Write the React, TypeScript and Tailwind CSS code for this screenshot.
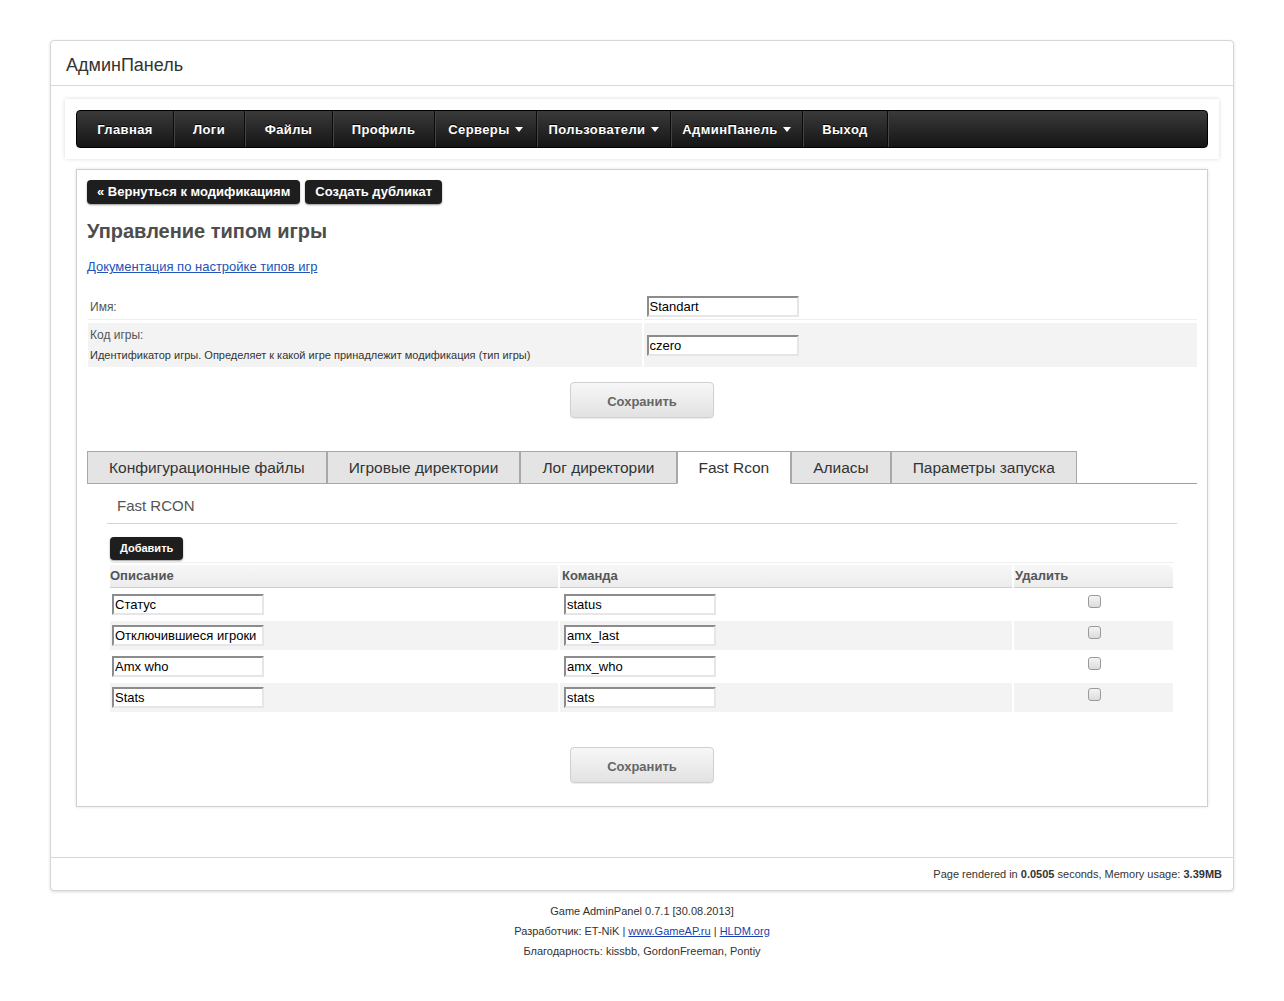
import React from "react";

const NAV = [
  { label: "Главная", w: "w-[97px]" },
  { label: "Логи", w: "w-[71px]" },
  { label: "Файлы", w: "w-[88px]" },
  { label: "Профиль", w: "w-[102px]" },
  { label: "Серверы", w: "w-[102px]", caret: true },
  { label: "Пользователи", w: "w-[134px]", caret: true },
  { label: "АдминПанель", w: "w-[132px]", caret: true },
  { label: "Выход", w: "w-[85px]" },
];

const TABS = [
  "Конфигурационные файлы",
  "Игровые директории",
  "Лог директории",
  "Fast Rcon",
  "Алиасы",
  "Параметры запуска",
];

const ROWS = [
  { desc: "Статус", cmd: "status" },
  { desc: "Отключившиеся игроки", cmd: "amx_last" },
  { desc: "Amx who", cmd: "amx_who" },
  { desc: "Stats", cmd: "stats" },
];

const font = "font-['Liberation_Sans',Arial,sans-serif]";

function Caret() {
  return (
    <span className="ml-[5px] inline-block h-0 w-0 border-x-[4px] border-t-[5px] border-x-transparent border-t-white align-middle" />
  );
}

function Field({ value }: { value: string }) {
  return (
    <input
      readOnly
      defaultValue={value}
      className={`${font} h-[21px] w-[152px] border-2 border-t-[#8c8c8c] border-l-[#8c8c8c] border-r-[#e6e6e6] border-b-[#e6e6e6] bg-white pl-[1px] text-[13px] text-black outline-none`}
    />
  );
}

function DarkButton({ text, small }: { text: string; small?: boolean }) {
  return (
    <button
      className={`${font} block rounded-[4px] bg-[#1e1e1e] font-bold text-white shadow-[0_1px_2px_rgba(0,0,0,0.4)] ${
        small ? "h-[23px] px-[10px] text-[11px]" : "h-[24px] px-[10px] text-[13px]"
      }`}
    >
      {text}
    </button>
  );
}

function SaveButton() {
  return (
    <button
      className={`${font} mx-auto block h-[36px] w-[144px] rounded-[4px] border border-[#d0d0d0] bg-gradient-to-b from-[#f7f7f7] to-[#e2e2e2] pt-[4px] text-[13px] font-bold text-[#666] shadow-[0_1px_1px_rgba(0,0,0,0.08)]`}
    >
      Сохранить
    </button>
  );
}

function Checkbox() {
  return (
    <span className="block h-[13px] w-[13px] rounded-[3px] border border-[#9a9a9a] bg-gradient-to-b from-[#f4f4f4] to-[#dcdcdc]" />
  );
}

export default function App() {
  return (
    <div className={`${font} min-h-screen bg-white pt-[40px] text-[#333]`}>
      <div className="mx-auto w-[1184px] rounded-[4px] border border-[#d6d6d6] bg-white shadow-[0_1px_3px_rgba(0,0,0,0.15)]">
        <div className="flex h-[45px] items-center border-b border-[#d9d9d9] px-[15px] pt-[4px] text-[18px] text-[#333]">
          АдминПанель
        </div>

        <div className="px-[25px] pb-[50px] pt-[13px]">
          <div className="-mx-[11px] bg-white p-[11px] shadow-[0_0_4px_rgba(0,0,0,0.15)]">
            <nav className="flex h-[38px] rounded-[4px] border border-black bg-gradient-to-b from-[#3a3a3a] to-[#161616]">
              {NAV.map((item) => (
                <div
                  key={item.label}
                  className={`${item.w} flex items-center justify-center border-r border-r-[#0a0a0a] pt-[1px] shadow-[1px_0_0_#444] text-[13px] font-bold tracking-[0.4px] text-white [text-shadow:0_-1px_0_#000]`}
                >
                  {item.label}
                  {item.caret && <Caret />}
                </div>
              ))}
            </nav>
          </div>

          <div className="mt-[10px] border border-[#cfcfcf] px-[10px] pb-[23px] pt-[10px] shadow-[0_0_3px_rgba(0,0,0,0.12)]">
            <div className="flex gap-[5px]">
              <DarkButton text="« Вернуться к модификациям" />
              <DarkButton text="Создать дубликат" />
            </div>

            <h1 className="mt-[13px] text-[20px] font-bold leading-[28px] text-[#4d4d4d]">
              Управление типом игры
            </h1>

            <a href="#" className="mt-[14px] block text-[13px] leading-[16px] text-[#2153b8] underline">
              Документация по настройке типов игр
            </a>

            <div className="mt-[18px] grid grid-cols-2 gap-x-[2px] gap-y-[3px] pl-[1px]">
              <div className="flex h-[27px] items-center border-b border-[#eeeeee] pl-[2px] pt-[1px] text-[12px] text-[#555]">
                Имя:
              </div>
              <div className="flex h-[27px] items-center border-b border-[#eeeeee] pl-[3px]">
                <Field value="Standart" />
              </div>
              <div className="h-[44px] bg-[#f3f3f3] pl-[2px] pt-[3px]">
                <div className="text-[12px] leading-[18px] text-[#555]">Код игры:</div>
                <div className="mt-[2px] text-[11px] leading-[18px] text-[#333]">
                  Идентификатор игры. Определяет к какой игре принадлежит модификация (тип игры)
                </div>
              </div>
              <div className="flex h-[44px] items-center bg-[#f3f3f3] pl-[3px]">
                <Field value="czero" />
              </div>
            </div>

            <div className="mt-[15px]">
              <SaveButton />
            </div>

            <div className="mt-[33px] flex border-b border-[#9f9f9f]">
              {TABS.map((t) => {
                const active = t === "Fast Rcon";
                return (
                  <div
                    key={t}
                    className={`-mb-px flex h-[33px] items-center border border-[#a8a8a8] px-[21px] text-[15.5px] text-[#333] ${
                      active ? "border-b-white bg-white" : "bg-[#e4e4e4]"
                    }`}
                  >
                    {t}
                  </div>
                );
              })}
            </div>

            <div className="px-[20px]">
              <div className="border-b border-[#d4d4d4] pb-[7px] pl-[10px] pt-[12px] text-[15px] leading-[20px] text-[#555]">
                Fast RCON
              </div>

              <div className="px-[3px]">
                <div className="mt-[13px] flex">
                  <DarkButton text="Добавить" small />
                </div>

                <div className="mt-[2px] border-t border-[#f0f0f0] pt-[2px]">
                  <div className="grid grid-cols-[448px_452px_159px] gap-[2px]">
                    <div className="flex h-[23px] items-center border-b border-[#cccccc] bg-gradient-to-b from-[#f7f7f7] to-[#ececec] text-[13px] font-bold text-[#555]">
                      Описание
                    </div>
                    <div className="flex h-[23px] items-center border-b border-[#cccccc] bg-gradient-to-b from-[#f7f7f7] to-[#ececec] pl-[2px] text-[13px] font-bold text-[#555]">
                      Команда
                    </div>
                    <div className="flex h-[23px] items-center rounded-tr-[6px] border-b border-[#cccccc] bg-gradient-to-b from-[#f7f7f7] to-[#ececec] pl-[1px] text-[13px] font-bold text-[#555]">
                      Удалить
                    </div>
                    {ROWS.map((r, i) => {
                      const bg = i % 2 === 1 ? "bg-[#f3f3f3]" : "bg-white";
                      return (
                        <React.Fragment key={r.cmd}>
                          <div className={`flex h-[29px] items-center pl-[2px] ${bg}`}>
                            <Field value={r.desc} />
                          </div>
                          <div className={`flex h-[29px] items-center pl-[4px] ${bg}`}>
                            <Field value={r.cmd} />
                          </div>
                          <div className={`flex h-[29px] items-start justify-center pl-[1px] pt-[5px] ${bg}`}>
                            <Checkbox />
                          </div>
                        </React.Fragment>
                      );
                    })}
                  </div>
                </div>
              </div>
            </div>

            <div className="mt-[35px]">
              <SaveButton />
            </div>
          </div>
        </div>

        <div className="flex h-[33px] items-center justify-end border-t border-[#d6d6d6] pr-[11px] text-[11px] text-[#333]">
          Page rendered in&nbsp;<b>0.0505</b>&nbsp;seconds, Memory usage:&nbsp;<b>3.39MB</b>
        </div>
      </div>

      <div className="mt-[10px] pb-[30px] text-center text-[11px] leading-[20px] text-[#333]">
        <div>Game AdminPanel 0.7.1 [30.08.2013]</div>
        <div>
          Разработчик: ET-NiK |{" "}
          <a href="#" className="text-[#1a3fb0] underline">
            www.GameAP.ru
          </a>{" "}
          |{" "}
          <a href="#" className="text-[#1a3fb0] underline">
            HLDM.org
          </a>
        </div>
        <div>Благодарность: kissbb, GordonFreeman, Pontiy</div>
      </div>
    </div>
  );
}
